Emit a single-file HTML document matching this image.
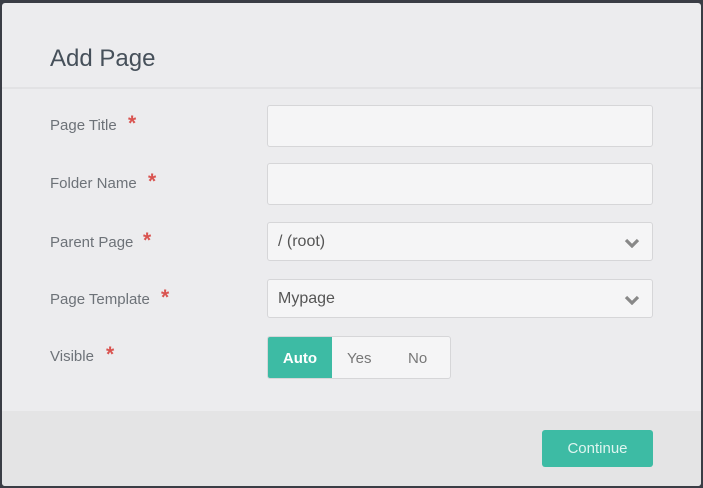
<!DOCTYPE html><html><head><style>
body{margin:0;width:703px;height:488px;background:#3a3d45;font-family:"Liberation Sans",sans-serif;position:relative;overflow:hidden}
.m{position:absolute;left:2px;top:3px;width:699px;height:483px;background:#ececee;border-radius:3px;overflow:hidden}
.t{position:absolute;left:48px;top:42px;font-size:24px;color:#46505a}
.hl{position:absolute;left:0;top:84px;width:699px;height:2px;background:#e2e2e4}
.l{position:absolute;left:48px;font-size:15px;color:#6d7278}
.l b{color:#d9534f;font-size:21px;position:absolute;top:-5px;font-weight:bold}
.i{position:absolute;left:265px;width:384px;background:#f5f5f6;border:1px solid #d6d6d8;border-radius:3px;font-size:16px;color:#555}
.i span{position:absolute;left:10px}
.ch{position:absolute;right:12px}
.f{position:absolute;left:0;top:408px;width:699px;height:75px;background:#e4e4e5}
.tg{position:absolute;left:265px;top:333px;width:182px;height:41px;border:1px solid #d6d6d8;border-radius:3px;background:#f5f5f6;font-size:15px;color:#777;overflow:hidden}
.btn{position:absolute;left:540px;top:427px;width:111px;height:37px;background:#3dbba4;border-radius:3px;color:#dff5f0;font-size:15px;text-align:center;line-height:38px}
</style></head><body><div class="m">
<div class="t">Add Page</div><div class="hl"></div>
<div class="l" style="top:114px">Page Title<b style="left:78px">*</b></div>
<div class="l" style="top:172px">Folder Name<b style="left:98px">*</b></div>
<div class="l" style="top:231px">Parent Page<b style="left:93px">*</b></div>
<div class="l" style="top:288px">Page Template<b style="left:111px">*</b></div>
<div class="l" style="top:345px">Visible<b style="left:56px">*</b></div>
<div class="i" style="top:102px;height:40px"></div>
<div class="i" style="top:160px;height:40px"></div>
<div class="i" style="top:219px;height:37px"><span style="top:10px">/ (root)</span><svg class="ch" style="top:15px" width="16" height="10"><path d="M2 2l6 6 6-6" stroke="#888" stroke-width="3.2" fill="none"/></svg></div>
<div class="i" style="top:276px;height:37px"><span style="top:10px">Mypage</span><svg class="ch" style="top:15px" width="16" height="10"><path d="M2 2l6 6 6-6" stroke="#888" stroke-width="3.2" fill="none"/></svg></div>
<div class="tg"><div style="position:absolute;left:0;top:0;width:64px;height:41px;background:#3dbba4;color:#fff;font-weight:bold;text-align:center;line-height:43px">Auto</div><div style="position:absolute;left:79px;top:13px">Yes</div><div style="position:absolute;left:140px;top:13px">No</div></div>
<div class="f"></div><div class="btn">Continue</div>
</div></body></html>
